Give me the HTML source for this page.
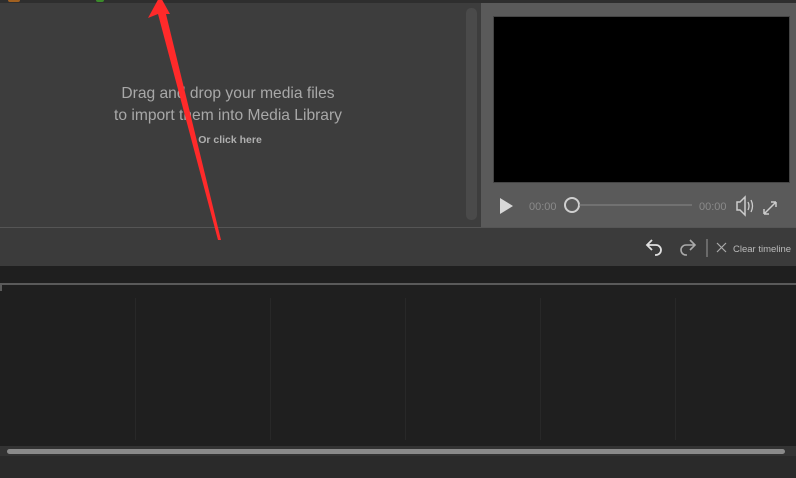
<!DOCTYPE html>
<html><head><style>
body{margin:0;width:796px;height:478px;overflow:hidden;background:#2a2a2a;font-family:"Liberation Sans",sans-serif;position:relative}
div{position:absolute;box-sizing:border-box}
</style></head><body>
<div style="left:0;top:0;width:796px;height:3px;background:#2e2e2e"></div>
<div style="left:8px;top:0;width:12px;height:2px;background:#a06020;border-radius:0 0 6px 6px"></div>
<div style="left:96px;top:0;width:8px;height:2px;background:#3a8a2a;border-radius:0 0 4px 4px"></div>
<div style="left:0;top:3px;width:481px;height:224px;background:#3d3d3d"></div>
<div style="left:466px;top:8px;width:11px;height:212px;background:#4a4a4a;border-radius:5px"></div>
<div style="left:-2px;top:83px;width:460px;text-align:center;color:#a8a8a8;font-size:15.6px;line-height:22px">Drag and drop your media files<br>to import them into Media Library</div>
<div style="left:0;top:134px;width:460px;text-align:center;color:#b0b0b0;font-size:10.5px;font-weight:bold">Or click here</div>
<div style="left:481px;top:3px;width:315px;height:224px;background:#5a5a5a"></div>
<div style="left:493px;top:16px;width:297px;height:167px;background:#000;border:1px solid #444"></div>
<svg style="position:absolute;left:481px;top:190px" width="315" height="32">
<polygon points="19,8 19,24 32,16" fill="#d8d8d8"/>
<text x="48" y="20" font-size="11" fill="#8a8a8a" font-family="Liberation Sans">00:00</text>
<circle cx="91" cy="15" r="7" fill="none" stroke="#cfcfcf" stroke-width="2"/>
<line x1="98" y1="15" x2="211" y2="15" stroke="#888" stroke-width="1"/>
<text x="218" y="20" font-size="11" fill="#8a8a8a" font-family="Liberation Sans">00:00</text>
<path d="M256 12h3l5-5v18l-5-5h-3z" fill="none" stroke="#ccc" stroke-width="1.5"/>
<path d="M267 12q2 4 0 8M270 10q3 6 0 12" fill="none" stroke="#ccc" stroke-width="1.3"/>
<path d="M283 24l12-12M283 24v-5M283 24h5M295 12v5M295 12h-5" fill="none" stroke="#ccc" stroke-width="1.5"/>
</svg>
<div style="left:0;top:227px;width:796px;height:1px;background:#555"></div>
<div style="left:0;top:228px;width:796px;height:38px;background:#3b3b3b"></div>
<svg style="position:absolute;left:640px;top:234px" width="156" height="28">
<path d="M12 6l-5 5 5 5M7 11h9a5 5 0 0 1 0 10h-1" fill="none" stroke="#e0e0e0" stroke-width="1.8"/>
<path d="M50 6l5 5-5 5M55 11h-9a5 5 0 0 0 0 10h1" fill="none" stroke="#aaa" stroke-width="1.6"/>
<line x1="67" y1="5" x2="67" y2="23" stroke="#999" stroke-width="1"/>
<path d="M77 9l9 9M86 9l-9 9" stroke="#aaa" stroke-width="1.2"/>
<text x="93" y="18" font-size="9.5" fill="#bbb" font-family="Liberation Sans">Clear timeline</text>
</svg>
<div style="left:0;top:266px;width:796px;height:180px;background:#1f1f1f"></div>
<div style="left:0;top:283px;width:796px;height:2px;background:#5a5a5a"></div>
<div style="left:0;top:283px;width:2px;height:8px;background:#5a5a5a"></div>
<div style="left:135px;top:298px;width:1px;height:142px;background:#282828"></div>
<div style="left:270px;top:298px;width:1px;height:142px;background:#282828"></div>
<div style="left:405px;top:298px;width:1px;height:142px;background:#282828"></div>
<div style="left:540px;top:298px;width:1px;height:142px;background:#282828"></div>
<div style="left:675px;top:298px;width:1px;height:142px;background:#282828"></div>
<div style="left:0;top:446px;width:796px;height:10px;background:#333"></div>
<div style="left:7px;top:449px;width:778px;height:5px;background:#8a8a8a;border-radius:3px"></div>
<svg style="position:absolute;left:0;top:0" width="796" height="478">
<polygon points="218,240 221,240 166,14 170,14 160,-4 148,18 158,14" fill="#ff2a2a"/>
</svg>
</body></html>
